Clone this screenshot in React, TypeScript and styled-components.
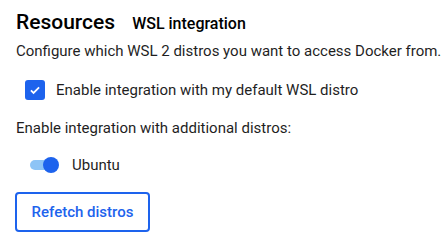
import React from "react";
import styled, { createGlobalStyle } from "styled-components";

const Global = createGlobalStyle`
  html, body { margin: 0; padding: 0; background: #ffffff; }
  body { font-family: Roboto, "Noto Sans", Arial, sans-serif; color: #000; }
`;

const Page = styled.div`
  width: 444px;
  height: 248px;
  box-sizing: border-box;
  padding: 9px 8px 0 16px;
  display: flex;
  flex-direction: column;
`;

const Header = styled.div`
  display: flex;
  align-items: baseline;
  gap: 17px;
  height: 26px;
`;

const Title = styled.h1`
  margin: 0;
  font-size: 21px;
  font-weight: 500;
  color: #000;
  line-height: 26px;
`;

const Subtitle = styled.h2`
  margin: 0;
  font-size: 16px;
  font-weight: 500;
  color: #000;
`;

const Description = styled.p`
  margin: 6px 0 0 0;
  font-size: 15px;
  line-height: 20px;
  color: #1f1f1f;
  white-space: nowrap;
`;

const CheckRow = styled.label`
  display: flex;
  align-items: center;
  gap: 11px;
  margin: 19px 0 0 9px;
  font-size: 15px;
  color: #1f1f1f;
`;

const Box = styled.span`
  width: 20px;
  height: 20px;
  border-radius: 3px;
  background: #1d63ed;
  display: flex;
  align-items: center;
  justify-content: center;
`;

const Label = styled.p`
  margin: 18px 0 0 0;
  font-size: 15px;
  line-height: 20px;
  color: #1f1f1f;
`;

const ToggleRow = styled.div`
  display: flex;
  align-items: center;
  gap: 13px;
  margin: 18px 0 0 14px;
  font-size: 15px;
  color: #1f1f1f;
`;

const Switch = styled.span`
  position: relative;
  width: 29px;
  height: 16px;
  display: inline-block;
`;

const Track = styled.span`
  position: absolute;
  left: 0;
  top: 3px;
  width: 26px;
  height: 10px;
  border-radius: 5px;
  background: #8dc4f6;
`;

const Thumb = styled.span`
  position: absolute;
  right: 0;
  top: 0;
  width: 16px;
  height: 16px;
  border-radius: 50%;
  background: #1d63ed;
`;

const Button = styled.button`
  margin: 18px 0 0 -1px;
  width: 135px;
  height: 40px;
  box-sizing: border-box;
  border: 2px solid #1d63ed;
  border-radius: 4px;
  background: #fff;
  color: #1d63ed;
  font-family: Roboto, Arial, sans-serif;
  font-size: 15px;
  font-weight: 500;
  align-self: flex-start;
`;

export default function App() {
  return (
    <>
      <Global />
      <Page>
        <Header>
          <Title>Resources</Title>
          <Subtitle>WSL integration</Subtitle>
        </Header>
        <Description>Configure which WSL 2 distros you want to access Docker from.</Description>
        <CheckRow>
          <Box>
            <svg width="14" height="14" viewBox="0 0 24 24">
              <path d="M5 12.5l4.5 4.5L19 7.5" fill="none" stroke="#fff" strokeWidth="3" />
            </svg>
          </Box>
          Enable integration with my default WSL distro
        </CheckRow>
        <Label>Enable integration with additional distros:</Label>
        <ToggleRow>
          <Switch>
            <Track />
            <Thumb />
          </Switch>
          Ubuntu
        </ToggleRow>
        <Button>Refetch distros</Button>
      </Page>
    </>
  );
}
